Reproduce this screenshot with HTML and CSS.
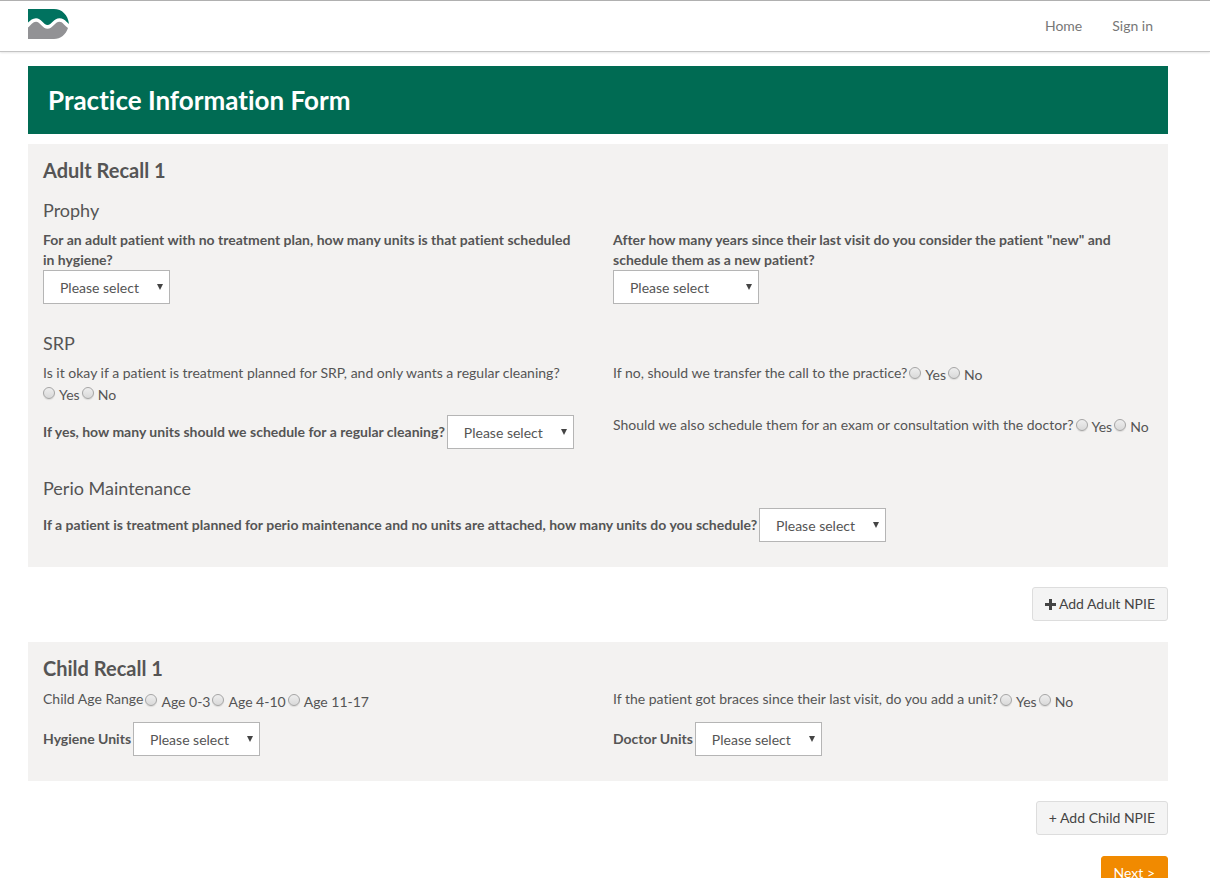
FILE: index.html
```html
<!DOCTYPE html>
<html lang="en">
<head>
<meta charset="utf-8">
<title>Practice Information Form</title>
<link rel="stylesheet" href="styles.css">
</head>
<body>
<header class="topbar">
  <div class="container topbar-inner">
    <a class="brand" href="#" aria-label="Home page">
      <svg width="42" height="30" viewBox="0 0 42 30" aria-hidden="true">
        <path fill="#00725f" d="M0 0H26C34 0 40 6 41 15L38.500 12.700C36.500 10.700 34.500 9.300 31.500 9.300C26 9.300 23.500 16 19.500 16C15.500 16 13 9.300 8 9.300C4.500 9.300 2.500 11.500 0 13.500Z"/>
        <path fill="#929295" d="M0 18.500C2.500 16.500 5 12.800 8 12.800C12 12.800 14.500 19.800 19.500 19.800C24.500 19.800 27 12.800 31.500 12.800C34.500 12.800 36.500 16.500 40 19C38 25.500 32.500 30 26 30H0Z"/>
      </svg>
    </a>
    <nav class="nav">
      <a href="#">Home</a>
      <a href="#">Sign in</a>
    </nav>
  </div>
</header>

<main class="container">
  <h1 class="banner">Practice Information Form</h1>
  <form>
    <section class="panel">
      <h2>Adult Recall 1</h2>

      <h3>Prophy</h3>
      <div class="row">
        <div class="stacked">
          <label for="adult-units">For an adult patient with no treatment plan, how many units is that patient scheduled in hygiene?</label>
          <span class="select"><select id="adult-units"><option>Please select</option></select></span>
        </div>
        <div class="stacked">
          <label for="new-years">After how many years since their last visit do you consider the patient "new" and schedule them as a new patient?</label>
          <span class="select select-wide"><select id="new-years"><option>Please select</option></select></span>
        </div>
      </div>

      <h3>SRP</h3>
      <div class="row">
        <div class="question" role="radiogroup" aria-labelledby="q-srp">
          <span id="q-srp">Is it okay if a patient is treatment planned for SRP, and only wants a regular cleaning?</span>
          <span class="answers">
            <label><input type="radio" name="srp">Yes</label>
            <label><input type="radio" name="srp">No</label>
          </span>
        </div>
        <div class="question" role="radiogroup" aria-labelledby="q-transfer">
          <span id="q-transfer">If no, should we transfer the call to the practice?</span>
          <span class="answers">
            <label><input type="radio" name="transfer">Yes</label>
            <label><input type="radio" name="transfer">No</label>
          </span>
        </div>
        <div class="inline">
          <label for="srp-units">If yes, how many units should we schedule for a regular cleaning?</label>
          <span class="select"><select id="srp-units"><option>Please select</option></select></span>
        </div>
        <div class="question" role="radiogroup" aria-labelledby="q-exam">
          <span id="q-exam">Should we also schedule them for an exam or consultation with the doctor?</span>
          <span class="answers">
            <label><input type="radio" name="exam">Yes</label>
            <label><input type="radio" name="exam">No</label>
          </span>
        </div>
      </div>

      <h3>Perio Maintenance</h3>
      <div class="inline">
        <label for="perio-units">If a patient is treatment planned for perio maintenance and no units are attached, how many units do you schedule?</label>
        <span class="select"><select id="perio-units"><option>Please select</option></select></span>
      </div>
    </section>

    <div class="actions">
      <button class="btn" type="button"><svg width="11" height="11" viewBox="0 0 11 11" aria-hidden="true"><path fill="currentColor" d="M4 0H7V4H11V7H7V11H4V7H0V4H4Z"/></svg>Add Adult NPIE</button>
    </div>

    <section class="panel panel-child">
      <h2>Child Recall 1</h2>
      <div class="row">
        <div class="question" role="radiogroup" aria-labelledby="q-age">
          <span id="q-age">Child Age Range</span>
          <span class="answers">
            <label><input type="radio" name="age">Age 0-3</label>
            <label><input type="radio" name="age">Age 4-10</label>
            <label><input type="radio" name="age">Age 11-17</label>
          </span>
        </div>
        <div class="question" role="radiogroup" aria-labelledby="q-braces">
          <span id="q-braces">If the patient got braces since their last visit, do you add a unit?</span>
          <span class="answers">
            <label><input type="radio" name="braces">Yes</label>
            <label><input type="radio" name="braces">No</label>
          </span>
        </div>
        <div class="inline">
          <label for="hygiene-units">Hygiene Units</label>
          <span class="select"><select id="hygiene-units"><option>Please select</option></select></span>
        </div>
        <div class="inline">
          <label for="doctor-units">Doctor Units</label>
          <span class="select"><select id="doctor-units"><option>Please select</option></select></span>
        </div>
      </div>
    </section>

    <div class="actions">
      <button class="btn" type="button">+ Add Child NPIE</button>
    </div>
    <div class="actions">
      <button class="btn btn-next" type="submit">Next &gt;</button>
    </div>
  </form>
</main>
</body>
</html>
```
FILE: styles.css
```css
* {
  box-sizing: border-box;
}

html {
  overflow-x: hidden;
  scrollbar-width: none;
}

body {
  margin: 0;
  background: #fff;
  color: #555;
  font: 14px/20px Lato, sans-serif;
  font-variant-ligatures: none;
}

.container {
  max-width: 1196px;
  padding: 0 28px;
}

.topbar {
  border-top: 1px solid #b0b0b0;
  border-bottom: 1px solid #c4c4c4;
  box-shadow: 0 1px 2px rgba(0, 0, 0, 0.1);
  margin-bottom: 14px;
}

.topbar-inner {
  display: flex;
  justify-content: space-between;
  align-items: flex-start;
  height: 50px;
}

.brand {
  display: block;
  padding-top: 8px;
}

.brand svg {
  display: block;
}

.nav {
  display: flex;
}

.nav a {
  padding: 15px;
  color: #777;
  text-decoration: none;
}

.banner {
  margin: 0 0 10px;
  padding: 19px 20px;
  background: #006b53;
  color: #fff;
  font-size: 26px;
  line-height: 30px;
  font-weight: 700;
}

.panel {
  padding: 15px 15px 25px;
  background: #f3f2f1;
}

.panel h2 {
  margin: 0 0 10px;
  font-size: 20px;
  line-height: 22px;
  font-weight: 700;
}

.panel h3 {
  margin: 19px 0 10px;
  font-size: 18px;
  line-height: 20px;
  font-weight: 400;
}

.row {
  display: grid;
  grid-template-columns: 1fr 1fr;
  gap: 10px 30px;
  margin-bottom: 29px;
}

.row:last-child {
  margin-bottom: 0;
}

.stacked {
  display: flex;
  flex-direction: column;
  align-items: flex-start;
}

.stacked label,
.inline label {
  font-weight: 700;
}

.inline {
  display: flex;
  align-items: center;
  gap: 2px;
}

.question {
  display: flex;
  flex-wrap: wrap;
  align-items: flex-start;
  align-content: flex-start;
  gap: 0 2px;
}

.answers {
  display: flex;
  gap: 2px;
  padding-top: 2px;
}

.panel-child .answers {
  padding-top: 3px;
}

.answers label {
  display: flex;
  align-items: flex-start;
  gap: 4px;
}

input[type="radio"] {
  appearance: none;
  width: 12px;
  height: 12px;
  margin: 2px 0 0;
  border: 1px solid #a5a5a5;
  border-radius: 50%;
  background: linear-gradient(#eee, #d9d9d9);
  box-shadow: 0 1px 1px rgba(0, 0, 0, 0.1);
}

input[type="radio"]:checked {
  background: #555;
}

.select {
  position: relative;
  flex: none;
  width: 127px;
}

.select-wide {
  width: 146px;
}

.select::after {
  content: "";
  position: absolute;
  top: 14px;
  right: 7px;
  border: solid transparent;
  border-width: 6px 3px 0;
  border-top-color: #444;
  pointer-events: none;
}

select {
  display: block;
  appearance: none;
  width: 100%;
  height: 34px;
  padding: 2px 16px 0;
  border: 1px solid #b5b5b5;
  border-radius: 0;
  background: #fff;
  color: #555;
  font: inherit;
}

.actions {
  display: flex;
  justify-content: flex-end;
  margin: 20px 0 21px;
}

.btn {
  display: flex;
  align-items: center;
  gap: 3px;
  height: 34px;
  padding: 0 12px;
  border: 1px solid #ddd;
  border-radius: 3px;
  background: #f4f4f4;
  color: #444;
  font: inherit;
}

.btn-next {
  border-color: #f18a00;
  background: #f18a00;
  color: #fff;
}
```
